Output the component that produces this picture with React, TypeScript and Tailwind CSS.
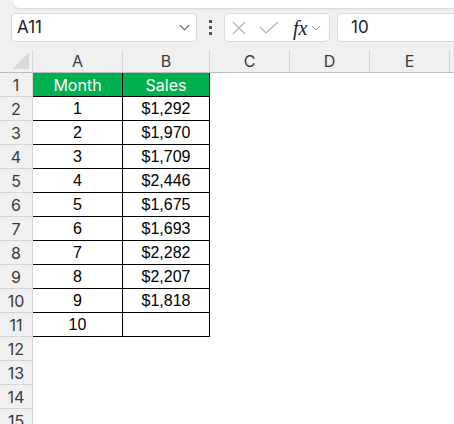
import React from 'react';

const SALES = ["$1,292", "$1,970", "$1,709", "$2,446", "$1,675", "$1,693", "$2,282", "$2,207", "$1,818"];

const COLS = [
  { name: "C", w: "w-[80px]" },
  { name: "D", w: "w-[80px]" },
  { name: "E", w: "w-[80px]" },
];

function Chevron({ className }: { className?: string }) {
  return (
    <svg className={className} viewBox="0 0 12 7" fill="none" stroke="currentColor" strokeWidth="1.2">
      <path d="M1 1l5 5 5-5" />
    </svg>
  );
}

function Toolbar() {
  return (
    <div className="bg-[#f0f0f0] h-[50px]">
      {/* ribbon bottom edge */}
      <div className="ml-[13px] h-[8px] bg-white rounded-bl-[6px] shadow-[0_1px_2px_rgba(0,0,0,0.12)]" />
      <div className="flex items-center mt-[5px] h-[29px]">
        <div className="ml-[11px] w-[186px] h-full flex items-center bg-white border border-[#dadada] rounded-[5px] pl-[5px] pr-[6px]">
          <span className="text-[17px] text-[#222]">A11</span>
          <Chevron className="ml-auto w-[11px] h-[7px] text-[#555]" />
        </div>
        <div className="w-[27px] flex flex-col items-center gap-[3px]">
          <div className="w-[3px] h-[3px] bg-[#555]" />
          <div className="w-[3px] h-[3px] bg-[#555]" />
          <div className="w-[3px] h-[3px] bg-[#555]" />
        </div>
        <div className="w-[106px] h-full flex items-center bg-white border border-[#dadada] rounded-[5px] pl-[7px]">
          <svg className="w-[14px] h-[14px] text-[#b4b4b4]" viewBox="0 0 14 14" fill="none" stroke="currentColor" strokeWidth="1.2">
            <path d="M1 1l12 12M13 1L1 13" />
          </svg>
          <svg className="ml-[13px] w-[20px] h-[13px] text-[#b4b4b4]" viewBox="0 0 20 13" fill="none" stroke="currentColor" strokeWidth="1.2">
            <path d="M1 6l6 6L19 1" />
          </svg>
          <span className="ml-[14px] text-[20px] leading-none italic text-[#222]" style={{ fontFamily: '"Liberation Serif", "DejaVu Serif", serif' }}>
            fx
          </span>
          <Chevron className="ml-[4px] w-[10px] h-[6px] text-[#8a8a8a]" />
        </div>
        <div className="ml-[7px] flex-1 h-full flex items-center bg-white border border-[#dadada] border-r-0 rounded-l-[5px] pl-[13px]">
          <span className="text-[17px] text-[#222]">10</span>
        </div>
      </div>
    </div>
  );
}

function ColumnHeaders() {
  return (
    <div className="flex h-[23px] bg-[#f0f0f0] border-b border-[#bdbdbd] text-[16px] text-[#3a3a3a]">
      <div className="w-[33px] flex items-end justify-end pr-[3px] pb-[3px] border-r border-[#d6d6d6]">
        <svg className="w-[17px] h-[17px]" viewBox="0 0 17 17">
          <path d="M17 0V17H0Z" fill="#d9d9d9" />
        </svg>
      </div>
      <div className="w-[90px] flex items-center justify-center border-r border-[#d6d6d6]">A</div>
      <div className="w-[87px] flex items-center justify-center border-r border-[#d6d6d6]">B</div>
      {COLS.map(c => (
        <div key={c.name} className={`${c.w} flex items-center justify-center border-r border-[#d6d6d6]`}>
          {c.name}
        </div>
      ))}
      <div className="flex-1" />
    </div>
  );
}

function RowHeader({ n }: { n: number }) {
  return (
    <div className="w-[33px] h-full flex items-center justify-center bg-[#f0f0f0] border-r border-b border-[#d6d6d6] text-[16px] text-[#3a3a3a]">
      {n}
    </div>
  );
}

export default function App() {
  const rows: { a: string; b: string }[] = [
    { a: "Month", b: "Sales" },
    ...SALES.map((s, i) => ({ a: String(i + 1), b: s })),
    { a: "10", b: "" },
  ];

  return (
    <div className="w-[454px] h-[424px] overflow-hidden bg-white" style={{ fontFamily: 'Inter, "Noto Sans", sans-serif' }}>
      <Toolbar />
      <ColumnHeaders />
      {rows.map((r, i) => {
        const head = i === 0;
        return (
          <div key={i} className="flex h-[24px]">
            <RowHeader n={i + 1} />
            <div
              className={`w-[90px] h-full flex items-center justify-center border-r border-b border-black text-[16px] ${head ? "bg-[#00b050] text-white" : "text-black"}`}
              style={{ fontFamily: head ? 'Inter, "Noto Sans", sans-serif' : '"Liberation Sans", Arial, sans-serif' }}
            >
              {r.a}
            </div>
            <div
              className={`w-[87px] h-full flex items-center justify-center border-r border-b border-black text-[16px] ${head ? "bg-[#00b050] text-white" : "text-black"}`}
              style={{ fontFamily: head ? 'Inter, "Noto Sans", sans-serif' : '"Liberation Sans", Arial, sans-serif' }}
            >
              {r.b}
            </div>
          </div>
        );
      })}
      {[12, 13, 14, 15].map(n => (
        <div key={n} className="flex h-[24px]">
          <RowHeader n={n} />
        </div>
      ))}
    </div>
  );
}
